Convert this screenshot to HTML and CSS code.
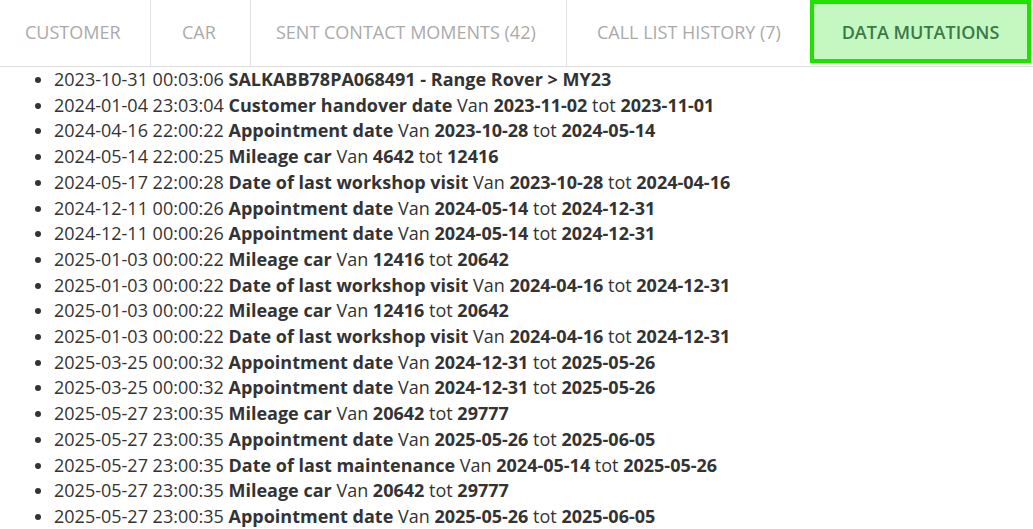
FILE: index.html
```html
<!DOCTYPE html>
<html lang="en">
<head>
  <meta charset="UTF-8">
  <title>Data Mutations</title>
  <link rel="stylesheet" href="styles.css">
</head>
<body>
  <div class="tabs">
    <div class="tab">CUSTOMER</div>
    <div class="tab">CAR</div>
    <div class="tab">SENT CONTACT MOMENTS (42)</div>
    <div class="tab">CALL LIST HISTORY (7)</div>
    <div class="tab active">DATA MUTATIONS</div>
  </div>
  <ul class="mutations">
    <li>2023-10-31 00:03:06 <b>SALKABB78PA068491 - Range Rover &gt; MY23</b></li>
    <li>2024-01-04 23:03:04 <b>Customer handover date</b> Van <b>2023-11-02</b> tot <b>2023-11-01</b></li>
    <li>2024-04-16 22:00:22 <b>Appointment date</b> Van <b>2023-10-28</b> tot <b>2024-05-14</b></li>
    <li>2024-05-14 22:00:25 <b>Mileage car</b> Van <b>4642</b> tot <b>12416</b></li>
    <li>2024-05-17 22:00:28 <b>Date of last workshop visit</b> Van <b>2023-10-28</b> tot <b>2024-04-16</b></li>
    <li>2024-12-11 00:00:26 <b>Appointment date</b> Van <b>2024-05-14</b> tot <b>2024-12-31</b></li>
    <li>2024-12-11 00:00:26 <b>Appointment date</b> Van <b>2024-05-14</b> tot <b>2024-12-31</b></li>
    <li>2025-01-03 00:00:22 <b>Mileage car</b> Van <b>12416</b> tot <b>20642</b></li>
    <li>2025-01-03 00:00:22 <b>Date of last workshop visit</b> Van <b>2024-04-16</b> tot <b>2024-12-31</b></li>
    <li>2025-01-03 00:00:22 <b>Mileage car</b> Van <b>12416</b> tot <b>20642</b></li>
    <li>2025-01-03 00:00:22 <b>Date of last workshop visit</b> Van <b>2024-04-16</b> tot <b>2024-12-31</b></li>
    <li>2025-03-25 00:00:32 <b>Appointment date</b> Van <b>2024-12-31</b> tot <b>2025-05-26</b></li>
    <li>2025-03-25 00:00:32 <b>Appointment date</b> Van <b>2024-12-31</b> tot <b>2025-05-26</b></li>
    <li>2025-05-27 23:00:35 <b>Mileage car</b> Van <b>20642</b> tot <b>29777</b></li>
    <li>2025-05-27 23:00:35 <b>Appointment date</b> Van <b>2025-05-26</b> tot <b>2025-06-05</b></li>
    <li>2025-05-27 23:00:35 <b>Date of last maintenance</b> Van <b>2024-05-14</b> tot <b>2025-05-26</b></li>
    <li>2025-05-27 23:00:35 <b>Mileage car</b> Van <b>20642</b> tot <b>29777</b></li>
    <li>2025-05-27 23:00:35 <b>Appointment date</b> Van <b>2025-05-26</b> tot <b>2025-06-05</b></li>
  </ul>
</body>
</html>
```

FILE: styles.css
```css
body {
  font-family: "Open Sans", sans-serif;
  font-size: 18px;
  line-height: 1.428571;
  color: #333;
  margin: 0;
  background: #fff;
  overflow: hidden;
}
.tabs {
  display: grid;
  grid-template-columns: 150px 100px 316px 244px 223px;
  height: 66px;
  border-bottom: 1px solid #ddd;
}
.tab {
  padding: 20px 0 20px 31px;
  color: #aaa;
  border-left: 1px solid #e2e2e2;
  white-space: nowrap;
}
.tab:first-child {
  border-left: none;
  padding-left: 25px;
}
.tab:nth-child(2) {
  padding-left: 31px;
}
.tab:nth-child(3) {
  padding-left: 25px;
}
.tab:nth-child(4) {
  padding-left: 30px;
}
.tab.active {
  align-self: start;
  height: 63px;
  box-sizing: border-box;
  width: 221px;
  padding: 16px 0;
  text-align: center;
  background: #c5f8c0;
  border: 4px solid #22e000;
  color: #3b784a;
  font-weight: 600;
}
.mutations {
  margin: 0;
  padding: 0 0 0 54px;
}
.mutations b {
  font-weight: 700;
}
```
